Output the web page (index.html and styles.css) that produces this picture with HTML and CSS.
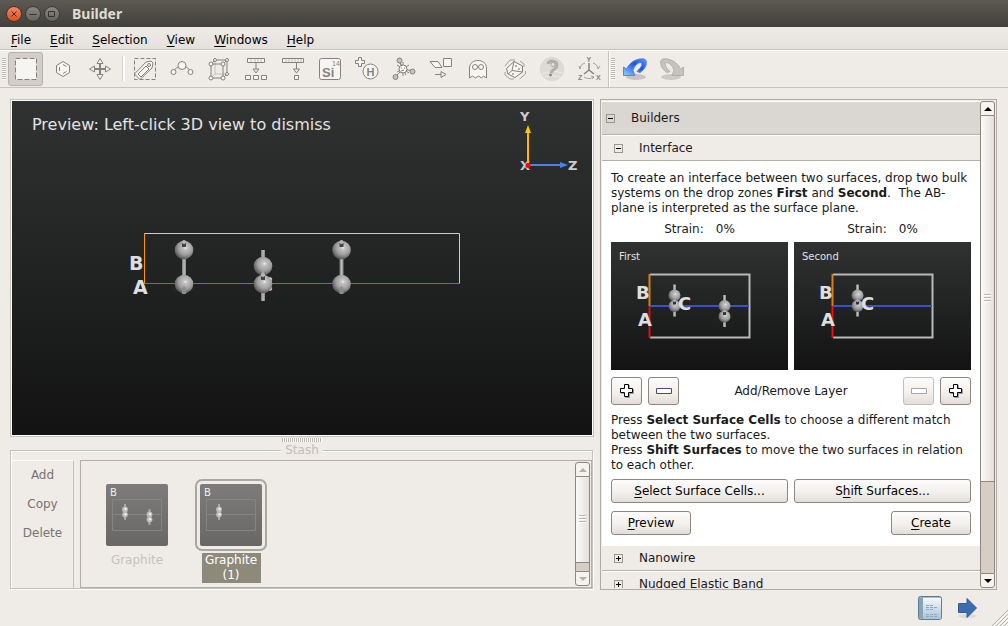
FILE: index.html
```html
<!DOCTYPE html>
<html lang="en">
<head>
  <meta charset="UTF-8">
  <title>Builder</title>
  <link rel="stylesheet" href="styles.css">
</head>
<body>
  <!-- shared gradients and atom shapes -->
  <svg class="defs" width="0" height="0" aria-hidden="true">
    <defs>
      <radialGradient id="ball" cx="0.58" cy="0.38" r="0.62">
        <stop offset="0" stop-color="#f0f0ee"/>
        <stop offset="0.15" stop-color="#c4c4c4"/>
        <stop offset="0.6" stop-color="#9f9f9f"/>
        <stop offset="1" stop-color="#585858"/>
      </radialGradient>
      <linearGradient id="rod" x1="0" x2="1" y1="0" y2="0">
        <stop offset="0" stop-color="#777"/>
        <stop offset="0.5" stop-color="#bbb"/>
        <stop offset="1" stop-color="#888"/>
      </linearGradient>
      <linearGradient id="blue" x1="1" x2="0" y1="0" y2="1">
        <stop offset="0" stop-color="#5b9bff"/>
        <stop offset="0.4" stop-color="#1d50e8"/>
        <stop offset="1" stop-color="#8fd4ff"/>
      </linearGradient>
      <linearGradient id="paper" x1="0" x2="0" y1="0" y2="1">
        <stop offset="0" stop-color="#f4f8fa"/>
        <stop offset="1" stop-color="#a9c4d8"/>
      </linearGradient>
      <g id="pair-long">
        <rect x="-2" y="-10" width="4" height="20" fill="url(#rod)"/>
        <circle cy="-17" r="9.300" fill="url(#ball)"/>
        <circle cy="17" r="9.300" fill="url(#ball)"/>
        <rect x="-2" y="-24" width="4" height="4" fill="#444"/>
        <circle cy="-25" r="2" fill="#b5b5b5"/>
        <path d="M-2 27v-5l2-3 2 3v5z" fill="#8c8c8c"/>
      </g>
      <g id="pair-short">
        <rect x="-2" y="-25" width="4" height="51" fill="url(#rod)"/>
        <circle cy="-9" r="9.300" fill="url(#ball)"/>
        <circle cy="9" r="9.300" fill="url(#ball)"/>
        <path d="M-2 0l2-5 2 5z" fill="#a9a9a9"/>
        <rect x="-2" y="1" width="4" height="4" fill="#444"/>
        <circle cy="0" r="2" fill="#b5b5b5"/>
      </g>
      <g id="pair-small">
        <rect x="-1" y="-16" width="3" height="32" fill="url(#rod)"/>
        <circle cx="0.500" cy="-5" r="6" fill="url(#ball)"/>
        <circle cx="0.500" cy="5.500" r="6" fill="url(#ball)"/>
        <rect x="-1" y="1" width="3" height="3" fill="#333"/>
        <circle cx="0.500" cy="0" r="1.300" fill="#b5b5b5"/>
      </g>
      <g id="pair-tiny">
        <rect x="-1" y="-8" width="2" height="16" fill="#aaa9a7"/>
        <circle cy="-2.600" r="2.900" fill="#bdbcba"/>
        <circle cy="2.600" r="2.900" fill="#bdbcba"/>
        <circle cx="0.500" cy="-3" r="1.200" fill="#eee"/>
        <circle cx="0.500" cy="2.200" r="1.200" fill="#eee"/>
      </g>
    </defs>
  </svg>

  <header class="titlebar">
    <button class="wm close" aria-label="Close"><svg viewBox="0 0 14 14"><path d="M4.500 4.500l5 5M9.500 4.500l-5 5"/></svg></button>
    <button class="wm" aria-label="Minimize"><svg viewBox="0 0 14 14"><path d="M3.500 7.500h7"/></svg></button>
    <button class="wm" aria-label="Maximize"><svg viewBox="0 0 14 14"><path d="M3.500 4.500h6v5h-6z"/></svg></button>
    <h1>Builder</h1>
  </header>

  <nav class="menubar">
    <button><u>F</u>ile</button>
    <button><u>E</u>dit</button>
    <button><u>S</u>election</button>
    <button><u>V</u>iew</button>
    <button><u>W</u>indows</button>
    <button><u>H</u>elp</button>
  </nav>

  <div class="toolbar">
    <span class="grip"></span>
    <button class="tool active" aria-label="Select">
      <svg viewBox="0 0 24 24"><rect x="1.500" y="1.500" width="21" height="21" fill="#f7f5f2" stroke-dasharray="5 2"/></svg>
    </button>
    <button class="tool" aria-label="Ring">
      <svg viewBox="0 0 24 24"><path class="paper" d="M12 4.500l6.500 4v7l-6.500 4-6.500-4v-7z"/><path d="M8.500 10v4M12 7.500l3.500 2M12 16.500l3.500-2"/></svg>
    </button>
    <button class="tool" aria-label="Move">
      <svg viewBox="0 0 24 24"><path d="M12 6v12M6 12h12" stroke-width="2"/><path class="paper" d="M12 1.500L15 6.500H9zM12 22.500L15 17.500H9zM1.500 12L6.500 9v6zM22.500 12L17.500 9v6z"/></svg>
    </button>
    <span class="separator"></span>
    <button class="tool" aria-label="Tags">
      <svg viewBox="0 0 24 24"><rect x="1.500" y="1.500" width="21" height="21" stroke-dasharray="4 2"/><path class="paper" d="M1.500 17L13 5l5-1 2 2-1 5L7 22.500z"/><circle cx="16" cy="8" r="1.500"/><path d="M5 17l3 3 8-8-3-3z"/></svg>
    </button>
    <button class="tool" aria-label="Molecule">
      <svg viewBox="0 0 24 24"><path d="M4 13l5-4M20 13l-5-4"/><circle class="paper" cx="12" cy="8.500" r="4"/><circle class="paper" cx="3.500" cy="15" r="2.500"/><circle class="paper" cx="20.500" cy="15" r="2.500"/></svg>
    </button>
    <button class="tool" aria-label="Crystal">
      <svg viewBox="0 0 24 24"><path d="M4 7h12v14H4zM4 7l4-4h12v14l-4 4M16 7l4-4"/><path d="M8 3v14h12M8 17l-4 4" opacity="0.400"/><g class="paper"><circle cx="4" cy="7" r="2"/><circle cx="16" cy="7" r="2"/><circle cx="4" cy="21" r="2"/><circle cx="16" cy="21" r="2"/><circle cx="8" cy="3" r="1.500"/><circle cx="20" cy="3" r="1.500"/><circle cx="20" cy="17" r="1.500"/></g></svg>
    </button>
    <button class="tool" aria-label="Fuse">
      <svg viewBox="0 0 24 24"><path class="paper" d="M3.500 1.500h17v4h-17zM1.500 18.500h5v4h-5zM9.500 18.500h5v4h-5zM17.500 18.500h5v4h-5z"/><path d="M7 2v3M11 2v3M14 2v3M17 2v3" opacity="0.500"/><path d="M12 6v6M9 12h6l-3 4z"/></svg>
    </button>
    <button class="tool" aria-label="Split">
      <svg viewBox="0 0 24 24"><path class="paper" d="M1.500 1.500h21v4h-21zM13.500 18.500h4v4h-4z"/><path d="M5 2v3M8 2v3M11 2v3M14 2v3M17 2v3M20 2v3" opacity="0.500"/><path d="M15.500 6v6M12.500 12h6l-3 4z"/></svg>
    </button>
    <button class="tool" aria-label="Element">
      <svg viewBox="0 0 24 24"><rect class="paper" x="1.500" y="1.500" width="21" height="21" rx="2"/><text x="4" y="20" font-size="13" font-weight="bold">Si</text><text x="14" y="9" font-size="7">14</text></svg>
    </button>
    <button class="tool" aria-label="Passivate">
      <svg viewBox="0 0 24 24"><path class="paper" d="M3.500 0.500h3v3h3v3h-3v3h-3v-3h-3v-3h3z"/><circle class="paper" cx="15.500" cy="14.500" r="7.500"/><text x="11.500" y="18.500" font-size="11" font-weight="bold">H</text></svg>
    </button>
    <button class="tool" aria-label="Cluster">
      <svg viewBox="0 0 24 24"><path d="M11 12L7 3M11 12l10 2M11 12l-8 8"/><path d="M11 5v14M5 8l12 8M5 15l12-7M8 6l6 12"/><circle class="paper" cx="11" cy="12" r="4"/><circle class="ball" cx="7.500" cy="3.500" r="2.500"/><circle class="ball" cx="20.500" cy="14.500" r="2.500"/><circle class="ball" cx="3.500" cy="20" r="2.500"/><path d="M9 11h1M12 11h1M9 14l3-1"/></svg>
    </button>
    <button class="tool" aria-label="Transform">
      <svg viewBox="0 0 24 24"><path class="paper" d="M1 4.500h8l4 6H6zM14.500 1.500h8v8h-8z"/><path d="M6 17.500h6M12 14.500v6l5-3z"/></svg>
    </button>
    <button class="tool" aria-label="Ghost atoms">
      <svg viewBox="0 0 24 24"><path class="paper" d="M3.500 21V11c0-10 17-10 17 0v10l-3-2-2 2-3-2-3 2-3-2z"/><circle class="paper" cx="9" cy="10" r="2.500"/><circle class="paper" cx="15" cy="10" r="2.500"/></svg>
    </button>
    <button class="tool" aria-label="Perturb">
      <svg viewBox="0 0 24 24"><path class="paper" d="M3.500 11.500L11 4.500l8.500 4.500v6L12 20.500 5 17z"/><path d="M11 4.500l-2 9L19.500 15M9 13.500L5 17"/><path d="M2 9l5-6h5M17 4l4 3v3M22.500 14v3l-6 5M2 15v3l5 4h4" opacity="0.700"/><circle cx="13" cy="9" r="0.500"/><circle cx="16" cy="12" r="0.500"/><circle cx="10" cy="17" r="0.500"/></svg>
    </button>
    <button class="tool" aria-label="Python">
      <svg viewBox="0 0 24 24"><circle cx="12" cy="12" r="11.500" fill="#dedbd7" stroke="#d8d5d0"/><path d="M2 17c6-3 14-3 20-1M5 20c5-2 11-1 15 0" stroke="#efece8"/><path d="M8 7c1-4 9-4 9 1 0 4-4 3-6 8" stroke="#b1aeaa" stroke-width="3"/><circle cx="13" cy="7.500" r="2" fill="#e7e4e0" stroke="#aaa7a3"/><circle cx="10.500" cy="18" r="1" fill="#9d9a96"/></svg>
    </button>
    <button class="tool" aria-label="Axes">
      <svg viewBox="0 0 24 24"><path d="M12 6v7l-5 4M12 13l5 4" stroke-width="1.500"/><path d="M3 12c0-3 2-5 5-6M21 12c0-3-2-5-5-6M7 20c3 2 7 2 10 0M15 22l2-2-3-1M3 12l-1-3M21 12l2-3" opacity="0.700"/><text x="9.500" y="5" font-size="7" font-weight="bold">Y</text><text x="1" y="23" font-size="7" font-weight="bold">Z</text><text x="19" y="23" font-size="7" font-weight="bold">X</text></svg>
    </button>
    <div class="history">
      <span class="grip"></span>
      <button class="tool" aria-label="Undo">
        <svg viewBox="0 0 24 24"><ellipse cx="13" cy="20" rx="10" ry="3" fill="#c9c6c2" stroke="none"/><path d="M0.500 10l3 2C7 5 14 1 21 2c4 1 3 9-4 13.500l-3-1c4-4 6-7 4-9-4 0-7 4-8 8l2 5H0.500z" fill="url(#blue)" stroke="#4d85ee"/></svg>
      </button>
      <button class="tool" aria-label="Redo">
        <svg viewBox="0 0 24 24"><ellipse cx="11" cy="20" rx="10" ry="3" fill="#cecbc7" stroke="none"/><path d="M23.500 10l-3 2C17 5 10 1 3 2c-4 1-3 9 4 13.500l3-1c-4-4-6-7-4-9 4 0 7 4 8 8l-2 5h11.500z" fill="#c6c3bf" stroke="#b3b0ac"/></svg>
      </button>
    </div>
  </div>

  <main class="workspace">
    <div class="left">
      <section class="view">
        <p class="hint">Preview: Left-click 3D view to dismiss</p>
        <svg class="scene" viewBox="0 0 580 334" role="img" aria-label="Unit cell preview">
          <path d="M132 132.500h315.500v50" stroke="#ccc" fill="none"/>
          <path d="M132.500 132v50" stroke="#ff9500"/>
          <path d="M132 182.500h315.500" stroke="#416dff"/>
          <g class="axis-label">
            <text x="117" y="169">B</text>
            <text x="121" y="193">A</text>
            <text x="247" y="190">C</text>
          </g>
          <use href="#pair-long" x="172" y="166"/>
          <use href="#pair-short" x="251" y="174"/>
          <use href="#pair-long" x="329.500" y="166"/>
          <g class="compass">
            <text x="508" y="20">Y</text>
            <text x="508" y="69">X</text>
            <text x="556" y="69">Z</text>
            <path d="M516 64V30" stroke="#ffb400" stroke-width="2"/>
            <path d="M513 32l3-8 3 8z" fill="#ffc400"/>
            <path d="M516 64h35" stroke="#4a82f0" stroke-width="2"/>
            <path d="M548 61l8 3-8 3z" fill="#4a82f0"/>
            <circle cx="516" cy="64.500" r="2.500" fill="#f00"/>
          </g>
        </svg>
      </section>
      <div class="splitter"></div>
      <fieldset class="stash">
        <legend>Stash</legend>
        <div class="stash-body">
          <div class="stash-actions">
            <button disabled>Add</button>
            <button disabled>Copy</button>
            <button disabled>Delete</button>
          </div>
          <div class="stash-list">
            <figure class="item">
              <svg class="thumb" viewBox="0 0 62 62">
                <path d="M6.500 15.500h49v31h-49zM6 30.500h50" fill="none" stroke="#858482"/>
                <use href="#pair-tiny" x="19" y="28"/>
                <use href="#pair-tiny" x="43.500" y="33"/>
                <text x="4" y="12">B</text>
              </svg>
              <figcaption>Graphite</figcaption>
            </figure>
            <figure class="item selected">
              <svg class="thumb" viewBox="0 0 62 62">
                <path d="M6.500 15.500h49v31h-49zM6 30.500h50" fill="none" stroke="#858482"/>
                <use href="#pair-tiny" x="19" y="28"/>
                <text x="4" y="12">B</text>
              </svg>
              <figcaption>Graphite (1)</figcaption>
            </figure>
            <div class="scrollbar off">
              <button disabled aria-label="Scroll up"><svg viewBox="0 0 8 4"><path d="M4 0l4 4H0z"/></svg></button>
              <div class="track"><div class="handle"></div></div>
              <button disabled aria-label="Scroll down"><svg viewBox="0 0 8 4"><path d="M0 0h8L4 4z"/></svg></button>
            </div>
          </div>
        </div>
      </fieldset>
    </div>

    <aside class="panel">
      <div class="panel-content">
        <button class="row top"><span class="box"></span>Builders</button>
        <button class="row"><span class="box"></span>Interface</button>
        <div class="interface">
          <p>To create an interface between two surfaces, drop two bulk systems on the drop zones <b>First</b> and <b>Second</b>.&nbsp; The AB-plane is interpreted as the surface plane.</p>
          <div class="zones">
            <div class="strain"><span>Strain:</span><span>0%</span></div>
            <div class="strain"><span>Strain:</span><span>0%</span></div>
            <svg class="zone" viewBox="0 0 177 128">
              <path d="M39 32.500h99.500v63H39" fill="none" stroke="#b9b9b7" stroke-width="2"/>
              <path d="M38.500 32v32" stroke="#d98010" stroke-width="2"/>
              <path d="M38.500 64v32" stroke="#d80f16" stroke-width="2"/>
              <path d="M39 64h99" stroke="#3453c8" stroke-width="2"/>
              <use href="#pair-small" x="63" y="58.500"/>
              <use href="#pair-small" x="113" y="69"/>
              <g class="axis-label"><text x="25" y="57">B</text><text x="27" y="84">A</text><text x="67" y="68">C</text></g>
              <text class="zone-name" x="8" y="18">First</text>
            </svg>
            <svg class="zone" viewBox="0 0 177 128">
              <path d="M39 32.500h99.500v63H39" fill="none" stroke="#b9b9b7" stroke-width="2"/>
              <path d="M38.500 32v32" stroke="#d98010" stroke-width="2"/>
              <path d="M38.500 64v32" stroke="#f00d12" stroke-width="2"/>
              <path d="M39 64h99" stroke="#3453c8" stroke-width="2"/>
              <use href="#pair-small" x="63" y="58.500"/>
              <g class="axis-label"><text x="25" y="57">B</text><text x="27" y="84">A</text><text x="67" y="68">C</text></g>
              <text class="zone-name" x="8" y="18">Second</text>
            </svg>
          </div>
          <div class="layers">
            <button class="btn square" aria-label="Add layer to first"><svg viewBox="0 0 16 16"><path class="shade" d="M6.500 2.500h4v4h4v4h-4v4h-4v-4h-4v-4h4z"/><path class="plus" d="M5.500 1.500h4v4h4v4h-4v4h-4v-4h-4v-4h4z"/></svg></button>
            <button class="btn square" aria-label="Remove layer from first"><svg viewBox="0 0 16 16"><path class="minus" d="M0.500 5.500h15v5h-15z"/></svg></button>
            <span>Add/Remove Layer</span>
            <button class="btn square" disabled aria-label="Remove layer from second"><svg viewBox="0 0 16 16"><path class="minus" d="M0.500 5.500h15v5h-15z"/></svg></button>
            <button class="btn square" aria-label="Add layer to second"><svg viewBox="0 0 16 16"><path class="shade" d="M6.500 2.500h4v4h4v4h-4v4h-4v-4h-4v-4h4z"/><path class="plus" d="M5.500 1.500h4v4h4v4h-4v4h-4v-4h-4v-4h4z"/></svg></button>
          </div>
          <p>Press <b>Select Surface Cells</b> to choose a different match between the two surfaces.<br>Press <b>Shift Surfaces</b> to move the two surfaces in relation to each other.</p>
          <div class="buttons wide">
            <button class="btn"><u>S</u>elect Surface Cells...</button>
            <button class="btn">S<u>h</u>ift Surfaces...</button>
          </div>
          <div class="buttons">
            <button class="btn"><u>P</u>review</button>
            <button class="btn"><u>C</u>reate</button>
          </div>
        </div>
        <button class="row"><span class="box closed"></span>Nanowire</button>
        <button class="row"><span class="box closed"></span>Nudged Elastic Band</button>
      </div>
      <div class="scrollbar">
        <button aria-label="Scroll up"><svg viewBox="0 0 8 4"><path d="M4 0l4 4H0z"/></svg></button>
        <div class="track"><div class="handle"></div></div>
        <button aria-label="Scroll down"><svg viewBox="0 0 8 4"><path d="M0 0h8L4 4z"/></svg></button>
      </div>
    </aside>
  </main>

  <footer class="statusbar">
    <button aria-label="Script">
      <svg viewBox="0 0 24 24"><rect x="0.500" y="0.500" width="23" height="23" rx="2" fill="#a9bfd0" stroke="#5f7b94"/><path d="M2 1.500v21M4 1.500v21" stroke="#6b879f"/><rect x="5" y="2" width="18" height="21" fill="url(#paper)"/><path d="M8 9.500h8M8 11.500h11M8 13.500h7M8 18.500h12M8 20.500h11" stroke="#93a7b6" stroke-dasharray="3 1"/></svg>
    </button>
    <button aria-label="Send to">
      <svg viewBox="0 0 24 24"><ellipse cx="12" cy="20" rx="9" ry="2" fill="#dedbd7"/><path d="M3.500 7.500H12v-5l9.500 9.500-9.500 9.500v-5H3.500z" fill="#3a6cae" stroke="#2f5c9c"/></svg>
    </button>
    <svg class="sizegrip" viewBox="0 0 16 16"><path d="M0 16L16 0M4 16L16 4M8 16L16 8M12 16l4-4" stroke="#b5b0a8"/><path d="M2 16L16 2M6 16L16 6M10 16l6-6M14 16l2-2" stroke="#fff"/></svg>
  </footer>
</body>
</html>
```
FILE: styles.css
```css
* {
  box-sizing: border-box;
}
body {
  margin: 0;
  height: 100vh;
  display: flex;
  flex-direction: column;
  overflow: hidden;
  background: #efebe7;
  color: #1a1a1a;
  font: 12px/15px "DejaVu Sans", sans-serif;
}
button {
  font: inherit;
  color: inherit;
  padding: 0;
  border: none;
  background: none;
}
svg {
  display: block;
}
p {
  margin: 0;
}
u {
  text-underline-offset: 2px;
  text-decoration-thickness: 1px;
}
.defs {
  position: absolute;
}

/* window frame */
.titlebar {
  flex: none;
  display: flex;
  align-items: center;
  gap: 3px;
  height: 27px;
  padding-left: 6px;
  background: linear-gradient(#5c5a52, #403f3a);
}
.titlebar h1 {
  margin: 0 0 0 9px;
  font: bold 14px/20px "Noto Sans", sans-serif;
  color: #dfdbd2;
}
.wm {
  width: 16px;
  height: 16px;
  border: 1px solid #3a3935;
  border-radius: 50%;
  background: linear-gradient(#8a8882, #65635d);
}
.wm svg {
  width: 14px;
  height: 14px;
  fill: none;
  stroke: #34332f;
}
.wm.close {
  background: linear-gradient(#f58560, #e2501f);
}
.menubar {
  flex: none;
  display: flex;
  gap: 1px;
  height: 23px;
  padding-left: 2px;
  background: linear-gradient(#efece8, #e4e0db);
  border-bottom: 1px solid #c6c2bd;
  color: #000;
}
.menubar button {
  padding: 4px 9px 0;
}

/* toolbar */
.toolbar {
  flex: none;
  display: flex;
  align-items: center;
  gap: 2px;
  height: 38px;
  padding: 0 0 1px 2px;
  border-top: 1px solid #fff;
  border-bottom: 1px solid #c6c2bd;
}
.grip {
  width: 4px;
  height: 22px;
  background: repeating-linear-gradient(#bab5af 0 1px, #fff 1px 2px);
}
.tool {
  width: 35px;
  height: 34px;
  display: flex;
  align-items: center;
  justify-content: center;
  border: 1px solid transparent;
  border-radius: 3px;
}
.tool.active {
  background: #d3cec9;
  border-color: #b8b3ad;
}
.tool svg {
  width: 24px;
  height: 24px;
  fill: none;
  stroke: #85827e;
}
.tool .paper {
  fill: #f7f5f2;
}
.tool .ball {
  fill: #c4c1bd;
}
.tool text {
  fill: #85827e;
  stroke: none;
  font-family: "Liberation Sans", sans-serif;
}
.separator {
  width: 6px;
  height: 25px;
  border-right: 2px solid #fff;
  border-left: 3px solid transparent;
  background: #d5d1cc;
  background-clip: padding-box;
}
.history {
  display: flex;
  align-items: center;
  gap: 2px;
  height: 36px;
  padding-left: 2px;
  border-left: 1px solid #c6c2bd;
  box-shadow: inset 1px 0 #fff;
}

/* main area */
.workspace {
  flex: 1;
  min-height: 0;
  display: flex;
  gap: 6px;
  padding: 11px 11px 0 10px;
}
.left {
  flex: 1;
  min-width: 0;
  display: flex;
  flex-direction: column;
}
.view {
  flex: 1;
  min-height: 0;
  position: relative;
  border: 1px solid #c4c0bb;
  box-shadow: inset 0 0 0 1px #fff;
  padding: 1px;
  background: linear-gradient(#303232, #131313) content-box;
}
.hint {
  position: absolute;
  left: 21px;
  top: 15px;
  font-size: 16px;
  line-height: 20px;
  color: #e2e2e2;
}
.scene {
  width: 100%;
  height: 100%;
}
.axis-label {
  fill: #dedede;
  font-size: 19px;
  font-weight: bold;
}
.compass {
  fill: #ccc;
  font-size: 13px;
  font-weight: bold;
}
.splitter {
  flex: none;
  align-self: center;
  width: 40px;
  height: 4px;
  margin: 1px 0;
  background: repeating-linear-gradient(90deg, #bab5af 0 1px, #fff 1px 2px);
}

/* stash */
.stash {
  flex: none;
  margin: 0 1px 1px 0;
  min-width: 0;
  padding: 2px 0 0 1px;
  border: 1px solid #c4c0bb;
  box-shadow: inset 1px 1px #fff, 1px 1px #fff;
}
.stash legend {
  margin: 0 auto;
  padding: 0 4px;
  background: #efebe7;
  color: #c2beb9;
}
.stash-body {
  display: flex;
  gap: 6px;
  height: 128px;
}
.stash-actions {
  display: flex;
  flex-direction: column;
  align-items: center;
  gap: 14px;
  width: 62px;
  padding-top: 7px;
  border-top: 1px solid #fff;
  border-right: 1px solid #c4c0bb;
  color: #78746f;
}
.stash-list {
  flex: 1;
  display: flex;
  align-items: flex-start;
  gap: 22px;
  padding: 1px 1px 1px 20px;
  border: 1px solid #b5aea6;
}
.stash-list .scrollbar {
  margin-left: auto;
  align-self: stretch;
}
.item {
  margin: 17px 0 0;
  width: 72px;
  display: flex;
  flex-direction: column;
  align-items: center;
  gap: 2px;
  text-align: center;
  color: #c6c3bf;
}
.thumb {
  width: 72px;
  height: 72px;
  padding: 3px;
  border: 2px solid transparent;
  border-radius: 7px;
  background: linear-gradient(#7d7c7a, #686765) content-box;
}
.thumb text {
  fill: #f0f0f0;
  font-size: 10px;
}
.item.selected .thumb {
  border-color: #aaa6a2;
}
.item.selected figcaption {
  width: 59px;
  background: #8e8a7b;
  color: #fff;
}

/* builders panel */
.panel {
  flex: none;
  width: 397px;
  display: flex;
  padding: 1px;
  border: 1px solid #b0aba4;
}
.panel-content {
  flex: 1;
  overflow: hidden;
  background: #fff;
}
.row {
  display: flex;
  align-items: center;
  gap: 16px;
  width: 100%;
  height: 26px;
  padding-left: 12px;
  background: #efebe7;
  border-top: 1px solid #fff;
  border-bottom: 1px solid #b5b0aa;
}
.row.top {
  height: 34px;
  padding-left: 4px;
  background: #dad6d2;
}
.box {
  width: 9px;
  height: 9px;
  border: 1px solid #9a9690;
  background: linear-gradient(#000, #000) center / 5px 1px no-repeat;
}
.box.closed {
  background: linear-gradient(#000, #000) center / 5px 1px no-repeat, linear-gradient(#000, #000) center / 1px 5px no-repeat;
}
.interface {
  display: flex;
  flex-direction: column;
  gap: 6px;
  padding: 9px 9px 10px;
}
.interface p {
  padding-top: 1px;
}
.zones {
  display: grid;
  grid-template-columns: 1fr 1fr;
  gap: 5px 6px;
}
.strain {
  display: flex;
  justify-content: center;
  gap: 12px;
}
.zone {
  width: 100%;
  background: linear-gradient(#303232, #131313);
}
.zone .axis-label {
  font-size: 18px;
}
.zone-name {
  fill: #e2e2e2;
  font-size: 10px;
}
.layers {
  display: flex;
  align-items: center;
  gap: 6px;
  padding: 1px 0;
}
.layers span {
  flex: 1;
  text-align: center;
}
.buttons {
  display: flex;
  justify-content: space-between;
  gap: 6px;
}
.buttons + .buttons {
  margin-top: 2px;
}
.btn {
  min-width: 80px;
  height: 24px;
  border: 1px solid #8e877f;
  border-radius: 3px;
  background: linear-gradient(#fdfcfb, #f2efeb 60%, #e4dcd8);
  color: #000;
}
.wide .btn {
  flex: 1;
}
.square {
  min-width: 0;
  width: 31px;
  height: 28px;
  display: flex;
  align-items: center;
  justify-content: center;
}
.square:disabled {
  border-color: #c4bfb9;
}
.square svg {
  width: 16px;
  height: 16px;
}
.plus {
  fill: #fff;
  stroke: #000;
}
.shade {
  fill: #aaa;
  stroke: #999;
}
.minus {
  fill: #fff;
  stroke: #4a4a92;
}
.square:disabled .minus {
  stroke: #aaa6a2;
}

/* scroll bars */
.scrollbar {
  flex: none;
  width: 15px;
  display: flex;
  flex-direction: column;
}
.scrollbar button {
  flex: none;
  display: flex;
  align-items: center;
  justify-content: center;
  height: 15px;
  border: 1px solid #8e877f;
  border-radius: 3px 3px 0 0;
  background: #f5f3f0;
}
.scrollbar button:last-child {
  border-radius: 0 0 3px 3px;
}
.scrollbar svg {
  width: 8px;
  height: 4px;
}
.scrollbar.off svg {
  fill: #b5b0aa;
}
.track {
  flex: 1;
  border: solid #8e877f;
  border-width: 0 1px;
  background: #d6cdc4;
}
.handle {
  height: 80%;
  display: flex;
  align-items: center;
  justify-content: center;
  border-bottom: 1px solid #8e877f;
  background: linear-gradient(90deg, #fbfaf9, #e6e0dc);
}
.off .handle {
  height: 91%;
}
.handle::before {
  content: "";
  width: 7px;
  height: 8px;
  background: repeating-linear-gradient(#bab5af 0 1px, #fff 1px 2px, transparent 2px 3px);
}

/* status bar */
.statusbar {
  flex: none;
  display: flex;
  justify-content: flex-end;
  align-items: center;
  gap: 13px;
  height: 36px;
}
.statusbar button svg {
  width: 24px;
  height: 24px;
}
.sizegrip {
  width: 16px;
  height: 16px;
  align-self: flex-end;
}
```
